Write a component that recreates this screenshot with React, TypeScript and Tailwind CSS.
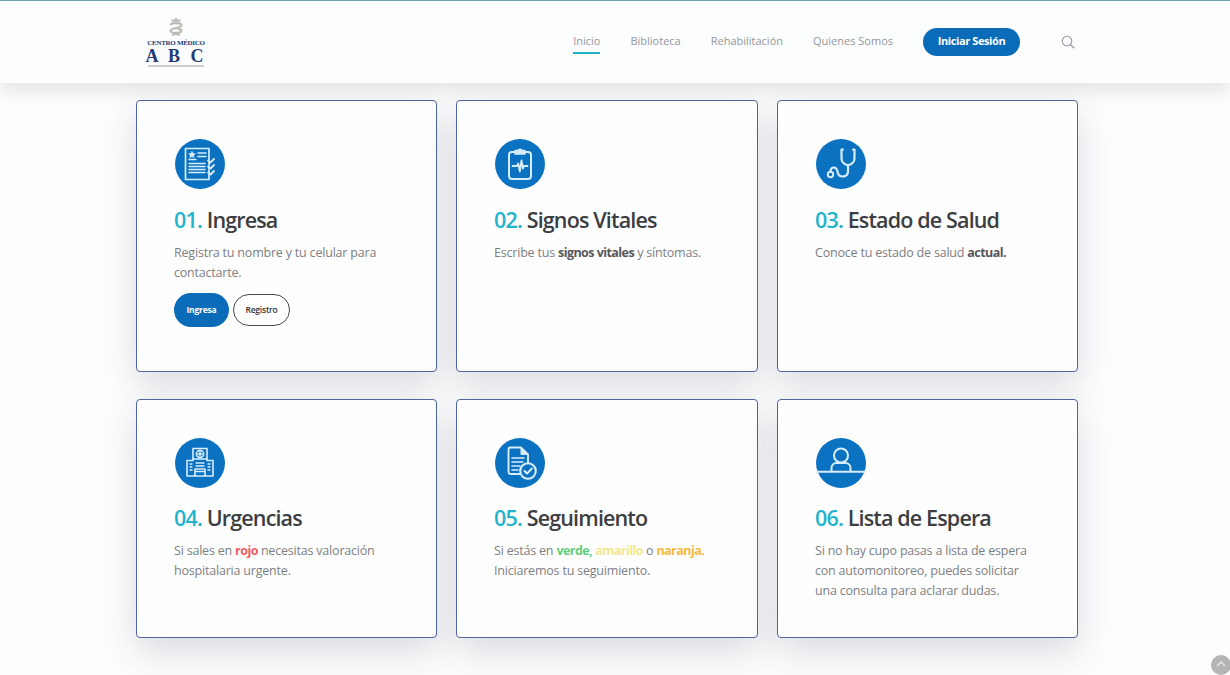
import React from "react";

const font = { fontFamily: '"Open Sans", "Noto Sans", sans-serif' };

function Circle({ children }: { children: React.ReactNode }) {
  return (
    <svg width="50" height="50" viewBox="0 0 50 50" fill="none" stroke="#d8edfa" strokeWidth="1.6" strokeLinecap="round" strokeLinejoin="round" className="ml-px block">
      <circle cx="25" cy="25" r="25" fill="#0b72c2" stroke="none" />
      {children}
    </svg>
  );
}

const IconForm = () => (
  <Circle>
    <path d="M10.5 9.5H34V40.5H10.5Z" strokeWidth="1.7" />
    <path d="M14 20.5H21M14 24.5H30M14 27.5H30M14 30.5H30M14 33.5H30M23 14H31M23 17.5H31" strokeWidth="1.4" />
    <path d="M17 12.5l1.1 2 2.2.3-1.6 1.6.4 2.2-2.1-1-2.1 1 .4-2.2-1.6-1.6 2.2-.3z" fill="#d8edfa" strokeWidth="0.6" />
    <path d="M33 21.5l2.5 2 3.5-3.5M33 27.5l2.5 2 3.5-3.5M33 33.5l2.5 2 3.5-3.5" strokeWidth="1.8" />
  </Circle>
);
const IconClipboard = () => (
  <Circle>
    <rect x="14" y="13" width="22" height="27" rx="3" strokeWidth="2" />
    <path d="M20 13v-1.5h3a2.2 2.2 0 0 1 4 0h3v3.5H20z" fill="#d8edfa" strokeWidth="1.4" />
    <path d="M17.5 27h4.5l1.3-2.5 1.5 8 1.7-11 1.5 8 .8-2.5h3.7" strokeWidth="1.8" />
  </Circle>
);
const IconSteth = () => (
  <Circle>
    <path d="M27 10.5h-1.5v9a6.5 6.5 0 0 0 13 0v-9H37" strokeWidth="2.2" />
    <path d="M32 26v6.5a5.2 5.2 0 0 1-10.2 1.2c-.6-2.4-1-5.2-3.8-5.2-2.3 0-3.5 1.9-3.5 4.2" strokeWidth="2.2" />
    <circle cx="14.5" cy="35.5" r="2.7" strokeWidth="1.9" />
  </Circle>
);
const IconHospital = () => (
  <Circle>
    <path d="M18 21V10.5H32V21" />
    <circle cx="25" cy="16" r="3.6" />
    <path d="M25 14v4M23 16h4" />
    <path d="M12 38V22.5H18V21H32V22.5H38V38Z" />
    <path d="M20 38V31H30V38M20 33.5H30" />
    <path d="M15 26h2M15 29h2M15 32h2M21 25h2M24 25h2M27 25h2M21 28h8M33 26h2M33 29h2M33 32h2" strokeWidth="1.3" />
  </Circle>
);
const IconDoc = () => (
  <Circle>
    <path d="M27 36H15.5a2 2 0 0 1-2-2V11.5a2 2 0 0 1 2-2H26l7 7v8" strokeWidth="1.9" />
    <path d="M26 9.5V16.5H33" fill="#d8edfa" strokeWidth="1" />
    <path d="M17 20h12M17 24h11M17 28h8M17 32h6" strokeWidth="1.5" />
    <circle cx="33" cy="33" r="7.8" fill="#0b72c2" strokeWidth="2.1" />
    <path d="M29.5 33l2.6 2.6 4.6-5" strokeWidth="2.1" />
  </Circle>
);
const IconPerson = () => (
  <Circle>
    <circle cx="25" cy="17.5" r="7" strokeWidth="2" />
    <path d="M15.5 33.5V30a5 5 0 0 1 5-5h9a5 5 0 0 1 5 5v3.5" strokeWidth="2" />
    <path d="M0.8 33.7H49.2" strokeWidth="2" />
  </Circle>
);

function Card({ n, title, icon, top, children }: { n: string; title: string; icon: React.ReactNode; top?: boolean; children?: React.ReactNode }) {
  return (
    <div className="h-full rounded-[4px] border-[1.5px] border-[#4f659f] bg-[#fefefe] pl-[37px] pr-4 pt-[38px] shadow-[0_14px_34px_rgba(40,50,70,0.16)]">
      <div className="h-[50px]">{icon}</div>
      <h3 className={(top ? "mt-[15px] " : "mt-[14px] ") + "text-[21.5px] leading-[32px] font-semibold tracking-[-0.85px] text-[#3c3e42]"}>
        <span className="text-[#1fb4cc]">{n}</span> {title}
      </h3>
      <div className="mt-[7px] text-[12.5px] leading-[20px] tracking-[-0.2px] text-[#7d7f84]">{children}</div>
    </div>
  );
}

const B = ({ children, c }: { children: React.ReactNode; c?: string }) => (
  <b className={"font-bold tracking-[-0.55px] " + (c ?? "text-[#55575b]")}>{children}</b>
);

export default function App() {
  return (
    <div style={font} className="relative h-[675px] w-[1230px] overflow-hidden bg-[#fdfdfe]">
      <header className="relative z-10 flex h-[83px] items-center border-t border-[#6f9db5] bg-[#fcfdfe] pl-[147px] pr-[155px] shadow-[0_8px_18px_rgba(0,0,0,0.1)]">
        <div className="mt-[-1px] flex w-[58px] flex-col items-center">
          <svg width="20" height="21" viewBox="0 0 22 21" fill="none" stroke="#bdbab4" strokeWidth="2.4">
            <path d="M11 0V4M6 3h10M5 8c0-3 12-3 12 0s-12 3-12 6 12 3 12 0c0-2-3-2-4-1" />
            <path d="M7 19c2-2 6-2 8 0" />
          </svg>
          <div className="mt-[1px] text-[7px] leading-[8px] font-bold tracking-[-0.3px] whitespace-nowrap text-[#1e3a78]" style={{ fontFamily: '"Liberation Serif", serif' }}>CENTRO MÉDICO</div>
          <div className="text-[18px] leading-[18px] font-bold tracking-[3px] whitespace-nowrap text-[#1e3a78]" style={{ fontFamily: '"Liberation Serif", serif' }}>A B C</div>
          <div className="h-[2px] w-[56px] bg-[#cfcfca]" />
        </div>
        <nav className="ml-auto mt-[-1px] flex items-center text-[11px] text-[#93979c]">
          <a className="relative">
            Inicio
            <span className="absolute -bottom-[4px] left-0 h-[1.5px] w-full bg-[#1fb4cc]" />
          </a>
          <a className="ml-[30px]">Biblioteca</a>
          <a className="ml-[30px]">Rehabilitación</a>
          <a className="ml-[30px]">Quienes Somos</a>
          <a className="ml-[30px] flex h-[28px] w-[97px] items-center justify-center rounded-full bg-[#0a6cb9] text-[11px] font-bold tracking-[-0.4px] text-white">Iniciar Sesión</a>
          <svg className="ml-[41px]" width="14" height="14" viewBox="0 0 14 14" fill="none" stroke="#93979c" strokeWidth="1.1" strokeLinecap="round">
            <circle cx="6" cy="6" r="4.8" />
            <path d="M9.5 9.5L13 13" />
          </svg>
        </nav>
      </header>

      <main className="ml-[136px] mt-[17px] grid w-[942px] grid-cols-[301px_302px_301px] grid-rows-[272px_239px] gap-x-[19px] gap-y-[27px]">
        <Card top n="01." title="Ingresa" icon={<IconForm />}>
          Registra tu nombre y tu celular para
          <br />
          contactarte.
          <div className="mt-[10px] flex items-center gap-1">
            <a className="flex h-[34px] w-[55px] items-center justify-center rounded-full bg-[#0a6cb9] text-[8.5px] font-bold text-white">Ingresa</a>
            <a className="flex h-[32px] w-[57px] items-center justify-center rounded-full border border-[#4a4a4a] bg-white text-[8.5px] font-semibold text-[#333]">Registro</a>
          </div>
        </Card>
        <Card top n="02." title="Signos Vitales" icon={<IconClipboard />}>
          Escribe tus <B>signos vitales</B> y síntomas.
        </Card>
        <Card top n="03." title="Estado de Salud" icon={<IconSteth />}>
          Conoce tu estado de salud <B>actual.</B>
        </Card>
        <Card n="04." title="Urgencias" icon={<IconHospital />}>
          Si sales en <B c="text-[#ee5a5f]">rojo</B> necesitas valoración
          <br />
          hospitalaria urgente.
        </Card>
        <Card n="05." title="Seguimiento" icon={<IconDoc />}>
          Si estás en <B c="text-[#62cf7c]">verde,</B> <B c="text-[#f3e88c]">amarillo</B> o <B c="text-[#f5b93c]">naranja.</B>
          <br />
          Iniciaremos tu seguimiento.
        </Card>
        <Card n="06." title="Lista de Espera" icon={<IconPerson />}>
          Si no hay cupo pasas a lista de espera
          <br />
          con automonitoreo, puedes solicitar
          <br />
          una consulta para aclarar dudas.
        </Card>
      </main>

      <div className="absolute left-[1211px] top-[655px] flex h-5 w-5 items-start justify-center rounded-full bg-[#b4b4b4] pt-[6px]">
        <svg width="10" height="6" viewBox="0 0 10 6" fill="none" stroke="#e8e8e8" strokeWidth="1.3"><path d="M1 5l4-4 4 4" /></svg>
      </div>
    </div>
  );
}
